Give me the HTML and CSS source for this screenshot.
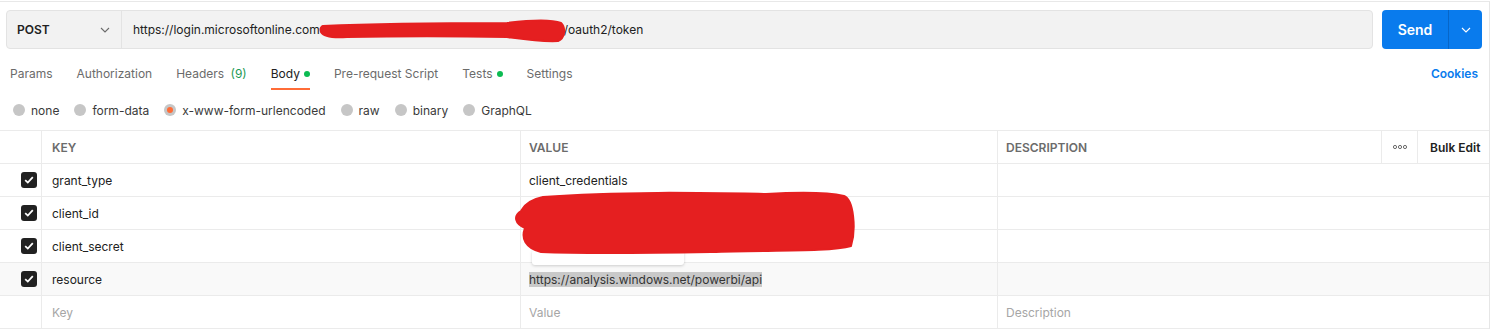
FILE: index.html
```html
<!DOCTYPE html>
<html>
<head>
<meta charset="utf-8">
<link rel="stylesheet" href="styles.css">
</head>
<body>
<div class="frame">
  <div class="urlbar">
    <div class="urlgroup">
      <div class="method">
        <span class="method-name">POST</span>
        <svg class="chev" width="10" height="6" viewBox="0 0 10 6"><path d="M1 1 L5 5 L9 1" fill="none" stroke="#6b6b6b" stroke-width="1.1"/></svg>
      </div>
      <div class="url">https://login.microsoftonline.com<span class="hidden"></span>/oauth2/token</div>
    </div>
    <div class="send">
      <span class="send-main">Send</span>
      <span class="send-drop"><svg width="10" height="6" viewBox="0 0 10 6"><path d="M1 1 L5 5 L9 1" fill="none" stroke="#fff" stroke-width="1.1"/></svg></span>
    </div>
  </div>

  <div class="tabsrow">
    <div class="tabs">
      <span class="tab">Params</span>
      <span class="tab">Authorization</span>
      <span class="tab">Headers <span class="count">(9)</span></span>
      <span class="tab active">Body<i class="dot"></i></span>
      <span class="tab">Pre-request Script</span>
      <span class="tab">Tests<i class="dot"></i></span>
      <span class="tab">Settings</span>
    </div>
    <span class="cookies">Cookies</span>
  </div>

  <div class="radios">
    <label class="radio"><i class="rb"></i>none</label>
    <label class="radio"><i class="rb"></i>form-data</label>
    <label class="radio"><i class="rb on"></i>x-www-form-urlencoded</label>
    <label class="radio"><i class="rb"></i>raw</label>
    <label class="radio"><i class="rb"></i>binary</label>
    <label class="radio"><i class="rb"></i>GraphQL</label>
  </div>

  <div class="table">
    <div class="c chk"></div>
    <div class="c head key">KEY</div>
    <div class="c head">VALUE</div>
    <div class="c head">DESCRIPTION</div>
    <div class="c more"><svg width="14" height="4" viewBox="0 0 14 4"><circle cx="2" cy="2" r="1.6" fill="none" stroke="#6b6b6b" stroke-width="1"/><circle cx="7" cy="2" r="1.6" fill="none" stroke="#6b6b6b" stroke-width="1"/><circle cx="12" cy="2" r="1.6" fill="none" stroke="#6b6b6b" stroke-width="1"/></svg></div>
    <div class="c bulk last">Bulk Edit</div>

    <div class="c chk"><span class="box"><svg width="10" height="8" viewBox="0 0 10 8"><path d="M1.2 4.2 L3.8 6.6 L8.8 1.2" fill="none" stroke="#fff" stroke-width="1.8"/></svg></span></div>
    <div class="c key">grant_type</div>
    <div class="c">client_credentials</div>
    <div class="c desc last"></div>

    <div class="c chk"><span class="box"><svg width="10" height="8" viewBox="0 0 10 8"><path d="M1.2 4.2 L3.8 6.6 L8.8 1.2" fill="none" stroke="#fff" stroke-width="1.8"/></svg></span></div>
    <div class="c key">client_id</div>
    <div class="c"></div>
    <div class="c desc last"></div>

    <div class="c chk"><span class="box"><svg width="10" height="8" viewBox="0 0 10 8"><path d="M1.2 4.2 L3.8 6.6 L8.8 1.2" fill="none" stroke="#fff" stroke-width="1.8"/></svg></span></div>
    <div class="c key">client_secret</div>
    <div class="c"></div>
    <div class="c desc last"></div>

    <div class="c chk hov"><span class="box"><svg width="10" height="8" viewBox="0 0 10 8"><path d="M1.2 4.2 L3.8 6.6 L8.8 1.2" fill="none" stroke="#fff" stroke-width="1.8"/></svg></span></div>
    <div class="c key hov">resource</div>
    <div class="c hov"><span class="sel">https://analysis.windows.net/powerbi/api</span></div>
    <div class="c desc last hov"></div>

    <div class="c chk"></div>
    <div class="c key ph">Key</div>
    <div class="c ph">Value</div>
    <div class="c desc last ph">Description</div>
  </div>

  <div class="popup"></div>
  <svg class="scribble s1" width="252" height="30" viewBox="0 0 252 30">
    <path d="M6 11 C 50 9, 120 8, 190 8 C 215 5, 236 5, 244 8 C 249 13, 248 23, 241 26 C 225 27, 205 24, 190 22 C 140 21, 80 21, 30 22 C 15 23, 6 21, 4 17 C 3 14, 4 12, 6 11 Z" fill="#e51f20" stroke="#e51f20" stroke-width="2" stroke-linejoin="round"/>
  </svg>
  <svg class="scribble s2" width="348" height="70" viewBox="0 0 348 70">
    <path d="M32 7 C 110 1, 200 3, 255 4 C 290 2, 320 3, 333 6 C 343 10, 345 40, 340 56 C 320 62, 260 60, 200 62 C 140 63, 80 64, 30 62 C 14 58, 10 48, 14 38 C 4 34, 2 26, 10 21 C 14 13, 22 9, 32 7 Z" fill="#e51f20" stroke="#e51f20" stroke-width="2" stroke-linejoin="round"/>
  </svg>
</div>
</body>
</html>
```

FILE: styles.css
```css
* { box-sizing: border-box; }
body {
  margin: 0;
  background: #fff;
  font-family: Inter, "Noto Sans", "Liberation Sans", sans-serif;
  font-size: 12px;
  color: #212121;
}
.frame {
  position: relative;
  width: 1490px;
  height: 329px;
  margin-top: 1px;
  border-top: 1px solid #e8e8e8;
  border-right: 1px solid #e6e6e6;
  overflow: hidden;
}
.urlbar {
  display: flex;
  padding: 8px 0 0 6px;
  height: 47px;
}
.urlgroup {
  display: flex;
  width: 1367px;
  height: 39px;
  background: #f2f2f2;
  border: 1px solid #e3e3e3;
  border-radius: 4px;
}
.method {
  width: 115px;
  display: flex;
  align-items: center;
  justify-content: space-between;
  padding: 0 11px 0 10px;
  border-right: 1px solid #e3e3e3;
}
.method-name { font-weight: 600; font-size: 12px; color: #212121; }
.url {
  display: flex;
  align-items: center;
  padding-left: 11px;
  color: #212121;
  white-space: pre;
  overflow: hidden;
}
.hidden {
  display: inline-block;
  width: 244px;
  height: 14px;
}
.send {
  display: flex;
  margin-left: 9px;
  width: 100px;
  height: 39px;
  background: #097bed;
  border-radius: 4px;
  color: #fff;
}
.send-main {
  width: 67px;
  display: flex;
  align-items: center;
  justify-content: center;
  font-size: 14px;
  font-weight: 600;
  border-right: 1px solid #0766c8;
}
.send-drop {
  flex: 1;
  display: flex;
  align-items: center;
  justify-content: center;
}
.tabsrow {
  display: flex;
  justify-content: space-between;
  align-items: flex-start;
  margin-top: 10px;
  padding: 0 11px 0 10px;
}
.tabs { display: flex; gap: 24px; }
.tab {
  display: flex;
  align-items: center;
  color: #6b6b6b;
  line-height: 16px;
  padding: 7px 0 6px;
  border-bottom: 2px solid transparent;
  white-space: pre;
}
.tab .count { color: #1e9a55; margin-left: 3px; }
.tab.active { color: #212121; border-bottom-color: #ff6c37; }
.dot {
  display: inline-block;
  width: 6px;
  height: 6px;
  border-radius: 50%;
  background: #0cbb52;
  margin-left: 4px;
}
.cookies {
  color: #097bed;
  font-weight: 600;
  line-height: 16px;
  padding-top: 7px;
}
.radios {
  display: flex;
  align-items: center;
  gap: 15px;
  height: 40px;
  padding-left: 13px;
}
.radio {
  display: flex;
  align-items: center;
  gap: 6px;
  color: #3a3a3a;
}
.rb {
  width: 12px;
  height: 12px;
  border-radius: 50%;
  background: #c6c6c6;
  display: flex;
  align-items: center;
  justify-content: center;
}
.rb.on::after {
  content: "";
  width: 6px;
  height: 6px;
  border-radius: 50%;
  background: #ff6c37;
}
.table {
  display: grid;
  grid-template-columns: 42px 479px 477px 384px 36px 1fr;
  grid-auto-rows: 33px;
  border-top: 1px solid #ebebeb;
}
.c {
  display: flex;
  align-items: center;
  padding-left: 8px;
  border-right: 1px solid #ebebeb;
  border-bottom: 1px solid #ebebeb;
  color: #212121;
  white-space: nowrap;
}
.c.last { border-right: none; }
.c.desc { grid-column: span 3; }
.c.key { padding-left: 10px; }
.head { color: #6b6b6b; font-weight: 600; }
.more { justify-content: center; padding-left: 0; }
.bulk { font-weight: 600; padding-left: 12px; }
.chk { justify-content: flex-end; padding: 0 4px 0 0; }
.box {
  width: 16px;
  height: 16px;
  border-radius: 3px;
  background: #212121;
  display: flex;
  align-items: center;
  justify-content: center;
}
.hov { background: #f9f9f9; }
.sel { background: #c9c9c9; color: #333; line-height: 15px; }
.ph { color: #a6a6a6; }
.popup {
  position: absolute;
  left: 532px;
  top: 248px;
  width: 152px;
  height: 15px;
  background: #fff;
  border-radius: 3px;
  box-shadow: 0 1px 3px rgba(0,0,0,0.18);
}
.scribble { position: absolute; }
.s1 { left: 317px; top: 13px; }
.s2 { left: 511px; top: 188px; }
```
